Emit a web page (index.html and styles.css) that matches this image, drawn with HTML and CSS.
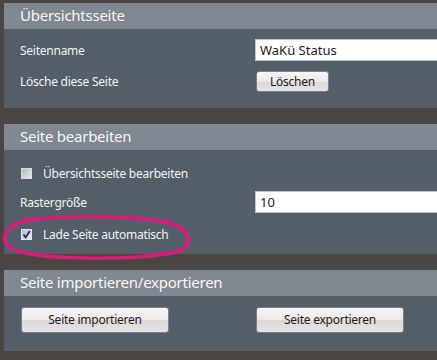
FILE: index.html
```html
<!DOCTYPE html>
<html lang="de">
<head>
    <meta charset="UTF-8">
    <title>Einstellungen</title>
    <link rel="stylesheet" href="styles.css">
</head>
<body>
<div class="page">
    <div class="panel">
        <div class="head">Übersichtsseite</div>
        <div class="rows first">
            <span class="label">Seitenname</span>
            <div class="field">WaKü Status</div>
            <span class="label">Lösche diese Seite</span>
            <div><span class="btn small">Löschen</span></div>
        </div>
    </div>

    <div class="panel">
        <div class="head">Seite bearbeiten</div>
        <div class="rows second">
            <label class="check"><span class="box"></span>Übersichtsseite bearbeiten</label>
            <span></span>
            <span class="label">Rastergröße</span>
            <div class="field">10</div>
            <label class="check"><span class="box on"><svg width="9" height="9" viewBox="0 0 9 9"><path d="M1.5 4.5 L3.6 7.4 L7.8 1" fill="none" stroke="#1d2a7a" stroke-width="1.8"/></svg></span>Lade Seite automatisch</label>
            <span></span>
        </div>
    </div>

    <div class="panel">
        <div class="head">Seite importieren/exportieren</div>
        <div class="rows third">
            <div><span class="btn wide">Seite importieren</span></div>
            <div><span class="btn wide">Seite exportieren</span></div>
        </div>
    </div>

    <!-- Markierung -->
    <svg class="mark" width="220" height="60" viewBox="0 210 220 60">
        <path d="M14 225 C40 215 120 215 165 222 C191 228 197 245 177 252 C140 260 60 260 25 253 C4 249 0 238 10 229 C15 224 22 221 34 219" fill="none" stroke="#e0187c" stroke-width="3.5" stroke-linecap="round"/>
    </svg>
</div>
</body>
</html>
```

FILE: styles.css
```css
html, body {
    margin: 0;
    padding: 0;
    height: 100%;
    overflow: hidden;
    background: #4b4643;
}
.page {
    position: relative;
    padding: 3px 0 0 4px;
    font-family: "Segoe UI", "Noto Sans", "Open Sans", sans-serif;
    font-size: 12px;
    letter-spacing: -0.25px;
    color: #f2f2f2;
}
.panel {
    background: #535e68;
    margin-bottom: 16px;
}
.head {
    background: #7f8890;
    height: 26px;
    line-height: 25px;
    padding-left: 16px;
    font-size: 15px;
    color: #f6f6f6;
}
.rows {
    display: grid;
    grid-template-columns: 235px 1fr;
    padding-left: 16px;
    align-items: center;
}
.first {
    padding-top: 10px;
    padding-bottom: 16px;
    row-gap: 10px;
    grid-template-rows: 22px 21px;
}
.second {
    padding-top: 12px;
    padding-bottom: 12px;
    grid-template-rows: 22px 22px 22px;
    row-gap: 7px;
}
.second .check:last-of-type {
    margin-top: 6px;
}
.third {
    padding: 11px 0 18px 17px;
    grid-template-columns: 235px 1fr;
}
.label {
    white-space: nowrap;
}
.field {
    height: 22px;
    box-sizing: border-box;
    background: #fff;
    border: 1px solid #b9c3cc;
    border-right: 0;
    color: #1b1b1b;
    font-size: 13px;
    letter-spacing: 0;
    line-height: 20px;
    padding-left: 4px;
}
.btn {
    display: inline-block;
    box-sizing: border-box;
    text-align: center;
    color: #1d1d1d;
    background: linear-gradient(#f6f6f6, #e9e9e9 50%, #d9d9d9 51%, #e4e4e4);
    border: 1px solid #7c7f83;
    border-radius: 3px;
}
.small {
    width: 73px;
    height: 21px;
    line-height: 19px;
    margin-left: 1px;
}
.wide {
    width: 148px;
    height: 26px;
    line-height: 24px;
}
.check {
    display: flex;
    align-items: center;
    gap: 11px;
    white-space: nowrap;
    padding-left: 1px;
}
.box {
    width: 11px;
    height: 11px;
    box-sizing: border-box;
    border: 1px solid #dcdcdc;
    background: linear-gradient(135deg, #b8b8b8, #e8e8e8);
    display: flex;
    align-items: center;
    justify-content: center;
}
.box.on {
    background: linear-gradient(135deg, #b8bccc, #e8e8f0);
    border-color: #e6e6e6;
}
.mark {
    position: absolute;
    left: 0;
    top: 210px;
}
```
